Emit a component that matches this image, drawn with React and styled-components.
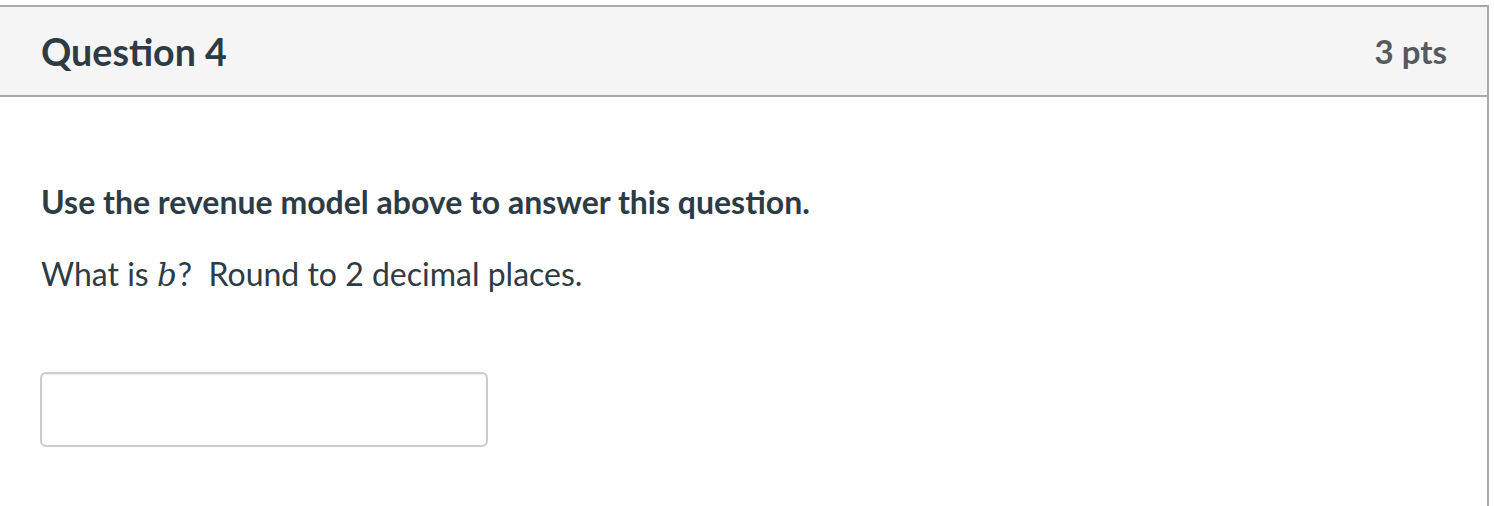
import React from "react";
import styled, { createGlobalStyle } from "styled-components";

const GlobalStyle = createGlobalStyle`
  html, body {
    margin: 0;
    padding: 0;
    background: #ffffff;
  }
  body {
    font-family: Lato, "Liberation Sans", sans-serif;
    color: #2d3b45;
    overflow: hidden;
  }
`;

const Card = styled.div`
  margin-top: 5px;
  width: 1487px;
  height: 520px;
  border: 2px solid #a9a9a9;
  border-left: none;
  background: #ffffff;
`;

const Header = styled.div`
  display: flex;
  align-items: center;
  justify-content: space-between;
  height: 88px;
  padding: 0 40px 0 41px;
  background: #f5f5f5;
  border-bottom: 2px solid #a9a9a9;
`;

const Title = styled.h2`
  margin: 0;
  font-size: 37.6px;
  font-weight: 700;
  color: #2d3b45;
`;

const Points = styled.span`
  font-size: 33px;
  font-weight: 700;
  color: #555a5e;
`;

const Body = styled.div`
  padding: 81px 40px 0 41px;
`;

const Paragraph = styled.p`
  margin: 0 0 ${({ gap }) => gap || 0}px;
  font-size: 32px;
  line-height: 48px;
  font-weight: ${({ bold }) => (bold ? 700 : 400)};
`;

const MathVar = styled.span`
  font-family: "DejaVu Serif", "Liberation Serif", serif;
  font-style: italic;
  font-size: 31px;
  margin-right: 1px;
`;

const AnswerInput = styled.input`
  display: block;
  box-sizing: border-box;
  width: 448px;
  height: 75px;
  margin: 73px 0 0 -1px;
  border: 2px solid #cccccc;
  border-radius: 6px;
  box-shadow: inset 0 1px 2px rgba(0, 0, 0, 0.08);
  background: #ffffff;
  outline: none;
`;

export default function App() {
  return (
    <>
      <GlobalStyle />
      <Card>
        <Header>
          <Title>Question 4</Title>
          <Points>3 pts</Points>
        </Header>
        <Body>
          <Paragraph bold gap={24}>
            Use the revenue model above to answer this question.
          </Paragraph>
          <Paragraph>
            What is <MathVar>b</MathVar>?&nbsp; Round to 2 decimal places.
          </Paragraph>
          <AnswerInput type="text" aria-label="Answer" />
        </Body>
      </Card>
    </>
  );
}
